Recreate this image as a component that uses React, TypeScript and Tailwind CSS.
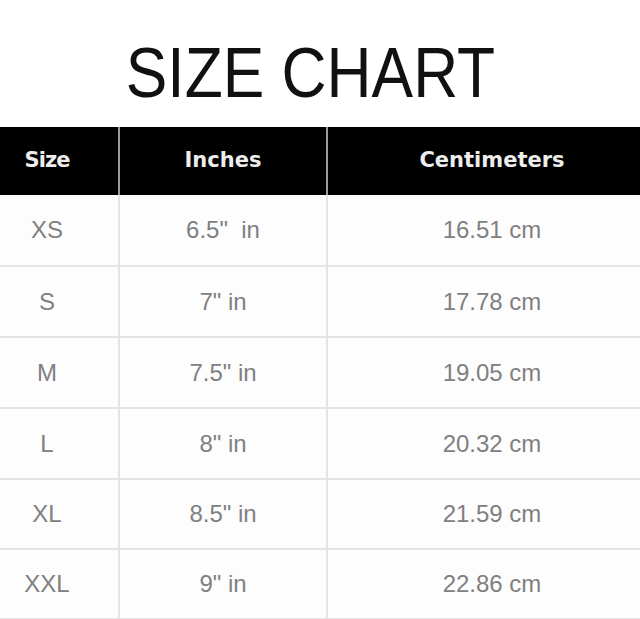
const rows = [
  { size: "XS", inches: '6.5"  in', cm: "16.51 cm", h: "h-[72px]" },
  { size: "S", inches: '7" in', cm: "17.78 cm", h: "h-[71px]" },
  { size: "M", inches: '7.5" in', cm: "19.05 cm", h: "h-[71px]" },
  { size: "L", inches: '8" in', cm: "20.32 cm", h: "h-[71px]" },
  { size: "XL", inches: '8.5" in', cm: "21.59 cm", h: "h-[70px]" },
  { size: "XXL", inches: '9" in', cm: "22.86 cm", h: "h-[70px]" },
];

export default function App() {
  return (
    <div className="w-[640px] h-[619px] overflow-hidden bg-white">
      {/* title */}
      <div className="h-[127px] flex justify-center pt-[38px] pr-[20px]">
        <h1 className="text-[70px] leading-none text-[#111] font-['Liberation_Sans',Arial,sans-serif] scale-x-[0.89] whitespace-nowrap">
          SIZE CHART
        </h1>
      </div>

      {/* header */}
      <div className="grid grid-cols-[120px_208px_312px] h-[68px] bg-black font-['DejaVu_Sans',Verdana,sans-serif] font-bold text-[21px] text-[#ededed]">
        <div className="flex items-center justify-center pr-[24px] border-r-2 border-[#9a9a9a] tracking-[-1px]">
          Size
        </div>
        <div className="flex items-center justify-center border-r-2 border-[#9a9a9a]">
          Inches
        </div>
        <div className="flex items-center justify-center pl-[16px]">Centimeters</div>
      </div>

      {/* rows */}
      <div className="font-['Liberation_Sans',Arial,sans-serif] text-[24px] text-[#808080] bg-[#fdfdfd]">
        {rows.map((r) => (
          <div
            key={r.size}
            className={`grid grid-cols-[120px_208px_312px] ${r.h} border-b-2 border-[#e4e4e4]`}
          >
            <div className="flex items-center justify-center pr-[24px] border-r-2 border-[#e4e4e4]">
              {r.size}
            </div>
            <div className="flex items-center justify-center border-r-2 border-[#e4e4e4] whitespace-pre">
              {r.inches}
            </div>
            <div className="flex items-center justify-center pl-[16px]">{r.cm}</div>
          </div>
        ))}
      </div>
    </div>
  );
}
